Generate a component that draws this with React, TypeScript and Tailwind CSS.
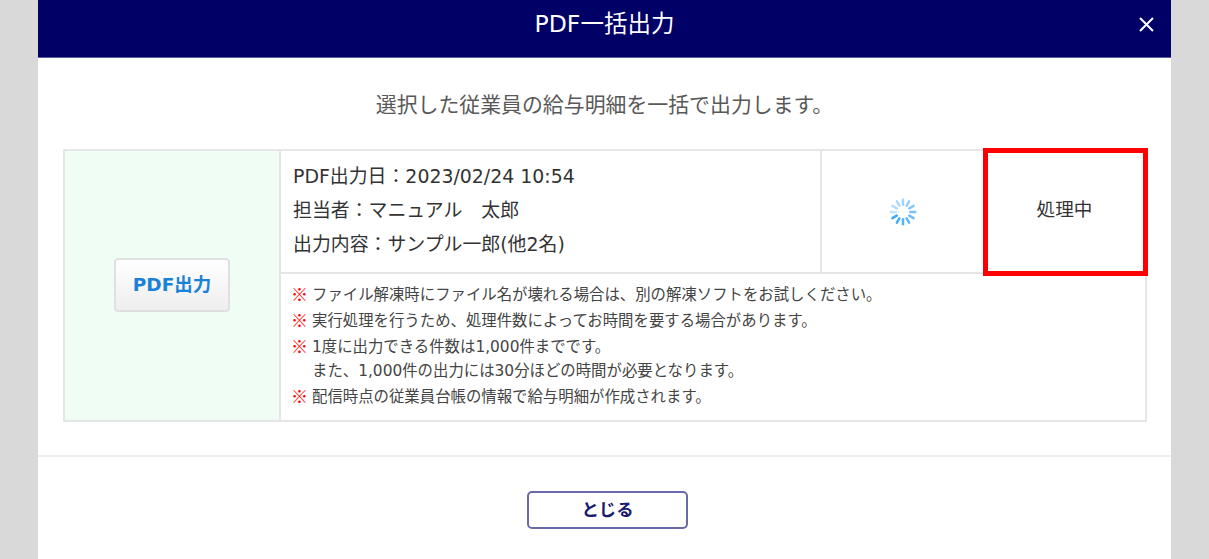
export default function App() {
  const font = { fontFamily: '"DejaVu Sans", "Noto Sans CJK JP", sans-serif' };
  const cjk = { fontFamily: '"Noto Sans CJK JP", sans-serif' };
  const bars = Array.from({ length: 12 }, (_, i) => i);
  const notes = [
    ["ファイル解凍時にファイル名が壊れる場合は、別の解凍ソフトをお試しください。"],
    ["実行処理を行うため、処理件数によってお時間を要する場合があります。"],
    ["1度に出力できる件数は1,000件までです。", "また、1,000件の出力には30分ほどの時間が必要となります。"],
    ["配信時点の従業員台帳の情報で給与明細が作成されます。"],
  ];
  return (
    <div className="h-[559px] w-[1209px] overflow-hidden bg-[#d9d9d9] px-[38px]" style={font}>
      <div className="flex h-[559px] w-[1133px] flex-col bg-white">
        <div className="relative flex h-[58px] shrink-0 items-center justify-center border-b border-[#5a5aa0] bg-[#000066] pb-[7px] text-[23.5px] text-white">
          PDF一括出力
          <svg className="absolute right-[16px] top-[16px]" width="17" height="17" viewBox="0 0 17 17" fill="none" stroke="white" strokeWidth="2">
            <path d="M2 2 L15 15 M15 2 L2 15" />
          </svg>
        </div>
        <div className="flex h-[91px] shrink-0 items-center justify-center pt-[5px] text-[20.9px] text-[#595959]">
          選択した従業員の給与明細を一括で出力します。
        </div>
        <div className="relative ml-[25px] mr-[24px] flex h-[273px] shrink-0 border-2 border-[#e6e6e6] text-[#333333]">
          <div className="flex w-[216px] shrink-0 items-center justify-center border-r-2 border-[#e6e6e6] bg-[#effdf5]">
            <div className="mt-[-2px] flex h-[54px] w-[116px] items-center justify-center rounded-[4px] border-2 border-[#e0e0e0] bg-gradient-to-b from-white to-[#eeeeee] text-[18.5px] font-bold text-[#1a82d6]">
              PDF出力
            </div>
          </div>
          <div className="flex min-w-0 flex-1 flex-col">
            <div className="flex h-[123px] shrink-0 border-b-2 border-[#e6e6e6]">
              <div className="flex w-[541px] shrink-0 flex-col justify-center gap-[8px] border-r-2 border-[#e6e6e6] pb-[3px] pl-[12px] text-[18.9px] leading-[26px]">
                <div>PDF出力日：2023/02/24 10:54</div>
                <div>担当者：マニュアル　太郎</div>
                <div>出力内容：サンプル一郎(他2名)</div>
              </div>
              <div className="flex w-[162px] shrink-0 items-center justify-center">
                <svg width="30" height="30" viewBox="0 0 30 30">
                  {bars.map((i) => (
                    <rect
                      key={i}
                      x="13.75"
                      y="1.5"
                      width="2.5"
                      height="7.5"
                      rx="1.25"
                      fill="#35a4f7"
                      opacity={0.3 + ((i + 3) % 12) * 0.06}
                      transform={`rotate(${i * 30} 15 15)`}
                    />
                  ))}
                </svg>
              </div>
              <div className="flex flex-1 items-center justify-center pb-[4px] text-[18.6px]">処理中</div>
            </div>
            <div className="flex flex-1 flex-col justify-center gap-[2px] pb-[3px] pl-[10px] text-[15.4px] leading-[24px] text-[#444444]">
              {notes.map((lines, i) => (
                <div key={i} className="flex">
                  <span className="h-[24px] w-[21px] shrink-0 text-[17px] font-black leading-[21px] text-[#ff0000]" style={cjk}>※</span>
                  <div>
                    {lines.map((l) => (
                      <div key={l}>{l}</div>
                    ))}
                  </div>
                </div>
              ))}
            </div>
          </div>
          <div className="absolute right-[-3px] top-[-3px] h-[128px] w-[165px] border-[5px] border-[#ff0000]" />
        </div>
        <div className="mt-[33px] flex flex-1 items-start justify-center border-t-2 border-[#eeeeee] pl-[6px] pt-[34px]">
          <div className="flex h-[38px] w-[161px] items-center justify-center rounded-[5px] border-2 border-[#6a6aaa] bg-white text-[17.4px] font-bold text-[#1a1a6e]">
            とじる
          </div>
        </div>
      </div>
    </div>
  );
}
